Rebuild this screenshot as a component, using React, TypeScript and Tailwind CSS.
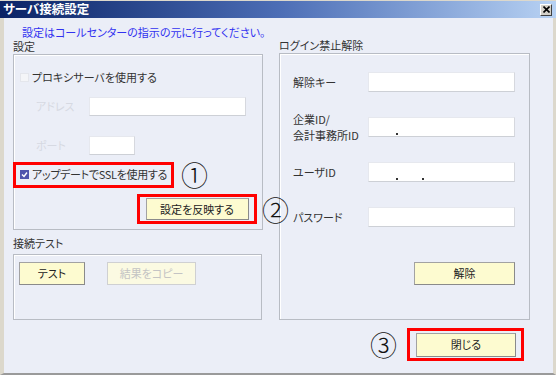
import React from 'react'

const font = "font-['Noto_Sans_CJK_JP','Noto_Sans',sans-serif] [font-feature-settings:'palt']"

const Btn = ({ label, w, h = 'h-[23px]', disabled = false }: { label: string; w: string; h?: string; disabled?: boolean }) => (
  <div
    className={`${w} ${h} flex items-center justify-center border text-[11px] whitespace-nowrap ${
      disabled
        ? 'bg-[#fbfae2] border-[#cfd0d2] text-[#c4c4c4]'
        : 'bg-[#fdfbd0] border-[#a2a2a2] border-b-[#8a8a8a] border-r-[#8a8a8a] text-[#222]'
    }`}
  >
    {label}
  </div>
)

const Field = ({ w = 'w-[147px]', h = 'h-[20px]', dots = [] as number[] }) => (
  <div className={`relative shrink-0 ${w} ${h} bg-white border border-[#e6e8ee] border-b-[#cdd0d6] border-r-[#d6d8de]`}>
    {dots.map((d) => (
      <span key={d} className="absolute bottom-[1px] w-[2px] h-[2px] bg-[#333]" style={{ left: d }} />
    ))}
  </div>
)

const Check = ({ checked = false }) =>
  checked ? (
    <div className="shrink-0 w-[9px] h-[9px] bg-[#4f55ad] flex items-center justify-center">
      <svg width="7" height="7" viewBox="0 0 7 7">
        <path d="M1 3.5 L3 5.5 L6 1.5" stroke="#fff" strokeWidth="1.4" fill="none" />
      </svg>
    </div>
  ) : (
    <div className="shrink-0 w-[9px] h-[9px] bg-[#f4f5f8] border border-[#e4e6ec]" />
  )

const groupBox = 'border border-[#b8bcc4] shadow-[inset_1px_1px_0_#fff]'

export default function App() {
  return (
    <div className={`w-[556px] h-[375px] flex flex-col bg-[#d4d0c8] overflow-hidden ${font}`}>
      {/* title bar */}
      <div className="h-[18px] flex items-center justify-between bg-linear-to-r from-[#0b2366] via-[#4c6db5] to-[#b8d2f3] border-t border-[#dcd8cc]">
        <span className="pl-[3px] text-white font-bold text-[12.5px] leading-none">サーバ接続設定</span>
        <div className="mr-[4px] w-[12px] h-[12px] bg-[#d4d0c8] border border-[#fff] border-b-[#404040] border-r-[#404040] flex items-center justify-center">
          <svg width="7" height="7" viewBox="0 0 7 7">
            <path d="M0.5 0.5 L6.5 6.5 M6.5 0.5 L0.5 6.5" stroke="#000" strokeWidth="1.6" />
          </svg>
        </div>
      </div>

      {/* body */}
      <div className="flex-1 flex flex-col bg-[#ebeef7] border-l-[4px] border-r-[3px] border-b-[2px] border-l-[#dcd8cc] border-r-[#dcd8cc] border-b-[#9a9a9a]">
        <div className="pl-[18px] pt-[7px] h-[21px] text-[11px] leading-[14px] text-[#3232f0] whitespace-nowrap">
          設定はコールセンターの指示の元に行ってください。
        </div>

        <div className="flex pl-[9px]">
          {/* left column */}
          <div className="w-[250px] flex flex-col">
            <div className="h-[15px] text-[11px] leading-[14px] text-[#333]">設定</div>
            <div className={`h-[176px] ${groupBox} pl-[6px] flex flex-col`}>
              <div className="mt-[15px] h-[14px] flex items-center gap-[3px] text-[11px] text-[#333] whitespace-nowrap">
                <Check />
                <span>プロキシサーバを使用する</span>
              </div>
              <div className="mt-[13px] flex items-center">
                <span className="ml-[16px] w-[53px] text-[11px] text-[#d6d9e2]">アドレス</span>
                <Field w="w-[157px]" h="h-[19px]" />
              </div>
              <div className="mt-[20px] flex items-center">
                <span className="ml-[16px] w-[53px] text-[11px] text-[#d6d9e2]">ポート</span>
                <Field w="w-[46px]" h="h-[19px]" />
              </div>
              <div className="mt-[6px] flex items-center">
                <div className="ml-[-7px] w-[161px] h-[26px] shrink-0 border-[3px] border-[#f00] pl-[4px] flex items-center gap-[3px] text-[11px] tracking-[-0.3px] text-[#333] whitespace-nowrap">
                  <Check checked />
                  <span>アップデートでSSLを使用する</span>
                </div>
                <span className="ml-[7px] text-[27px] leading-none font-light text-[#111]">①</span>
              </div>
              <div className="mt-[6px] ml-[117px] relative w-[120px] h-[30px] border-[3px] border-[#f00] flex items-center justify-center">
                <Btn label="設定を反映する" w="w-[103px]" h="h-[22px]" />
                <span className="absolute left-[122px] top-[-1px] text-[27px] leading-none font-light text-[#111]">②</span>
              </div>
            </div>
            <div className="h-[24px] pt-[6px] text-[11px] leading-[14px] text-[#333]">接続テスト</div>
            <div className={`h-[66px] w-[249px] ${groupBox} pl-[5px] pt-[7px] flex items-start`}>
              <Btn label="テスト" w="w-[66px]" />
              <div className="ml-[22px]">
                <Btn label="結果をコピー" w="w-[89px]" disabled />
              </div>
            </div>
          </div>

          {/* right column */}
          <div className="ml-[16px] w-[251px] flex flex-col">
            <div className="h-[14px] text-[11px] leading-[12px] text-[#333]">ログイン禁止解除</div>
            <div className={`h-[267px] ${groupBox} pl-[13px] flex flex-col text-[11px] text-[#333]`}>
              <div className="mt-[18px] h-[20px] flex items-center">
                <span className="w-[75px]">解除キー</span>
                <Field />
              </div>
              <div className="mt-[19px] h-[32px] flex items-center">
                <div className="w-[75px] shrink-0 flex flex-col leading-[16px] whitespace-nowrap">
                  <span>企業ID/</span>
                  <span>会計事務所ID</span>
                </div>
                <Field dots={[27]} />
              </div>
              <div className="mt-[19px] h-[20px] flex items-center">
                <span className="w-[75px]">ユーザID</span>
                <Field dots={[27, 53]} />
              </div>
              <div className="mt-[25px] h-[20px] flex items-center">
                <span className="w-[75px]">パスワード</span>
                <Field />
              </div>
              <div className="mt-[35px] ml-[121px]">
                <Btn label="解除" w="w-[101px]" />
              </div>
            </div>
          </div>
        </div>

        {/* bottom row */}
        <div className="mt-[8px] flex items-center justify-end pr-[29px]">
          <span className="text-[27px] leading-none font-light text-[#111]">③</span>
          <div className="ml-[10px] w-[117px] h-[33px] border-[3px] border-[#f00] pl-[6px] flex items-center">
            <Btn label="閉じる" w="w-[100px]" h="h-[24px]" />
          </div>
        </div>
      </div>
    </div>
  )
}
